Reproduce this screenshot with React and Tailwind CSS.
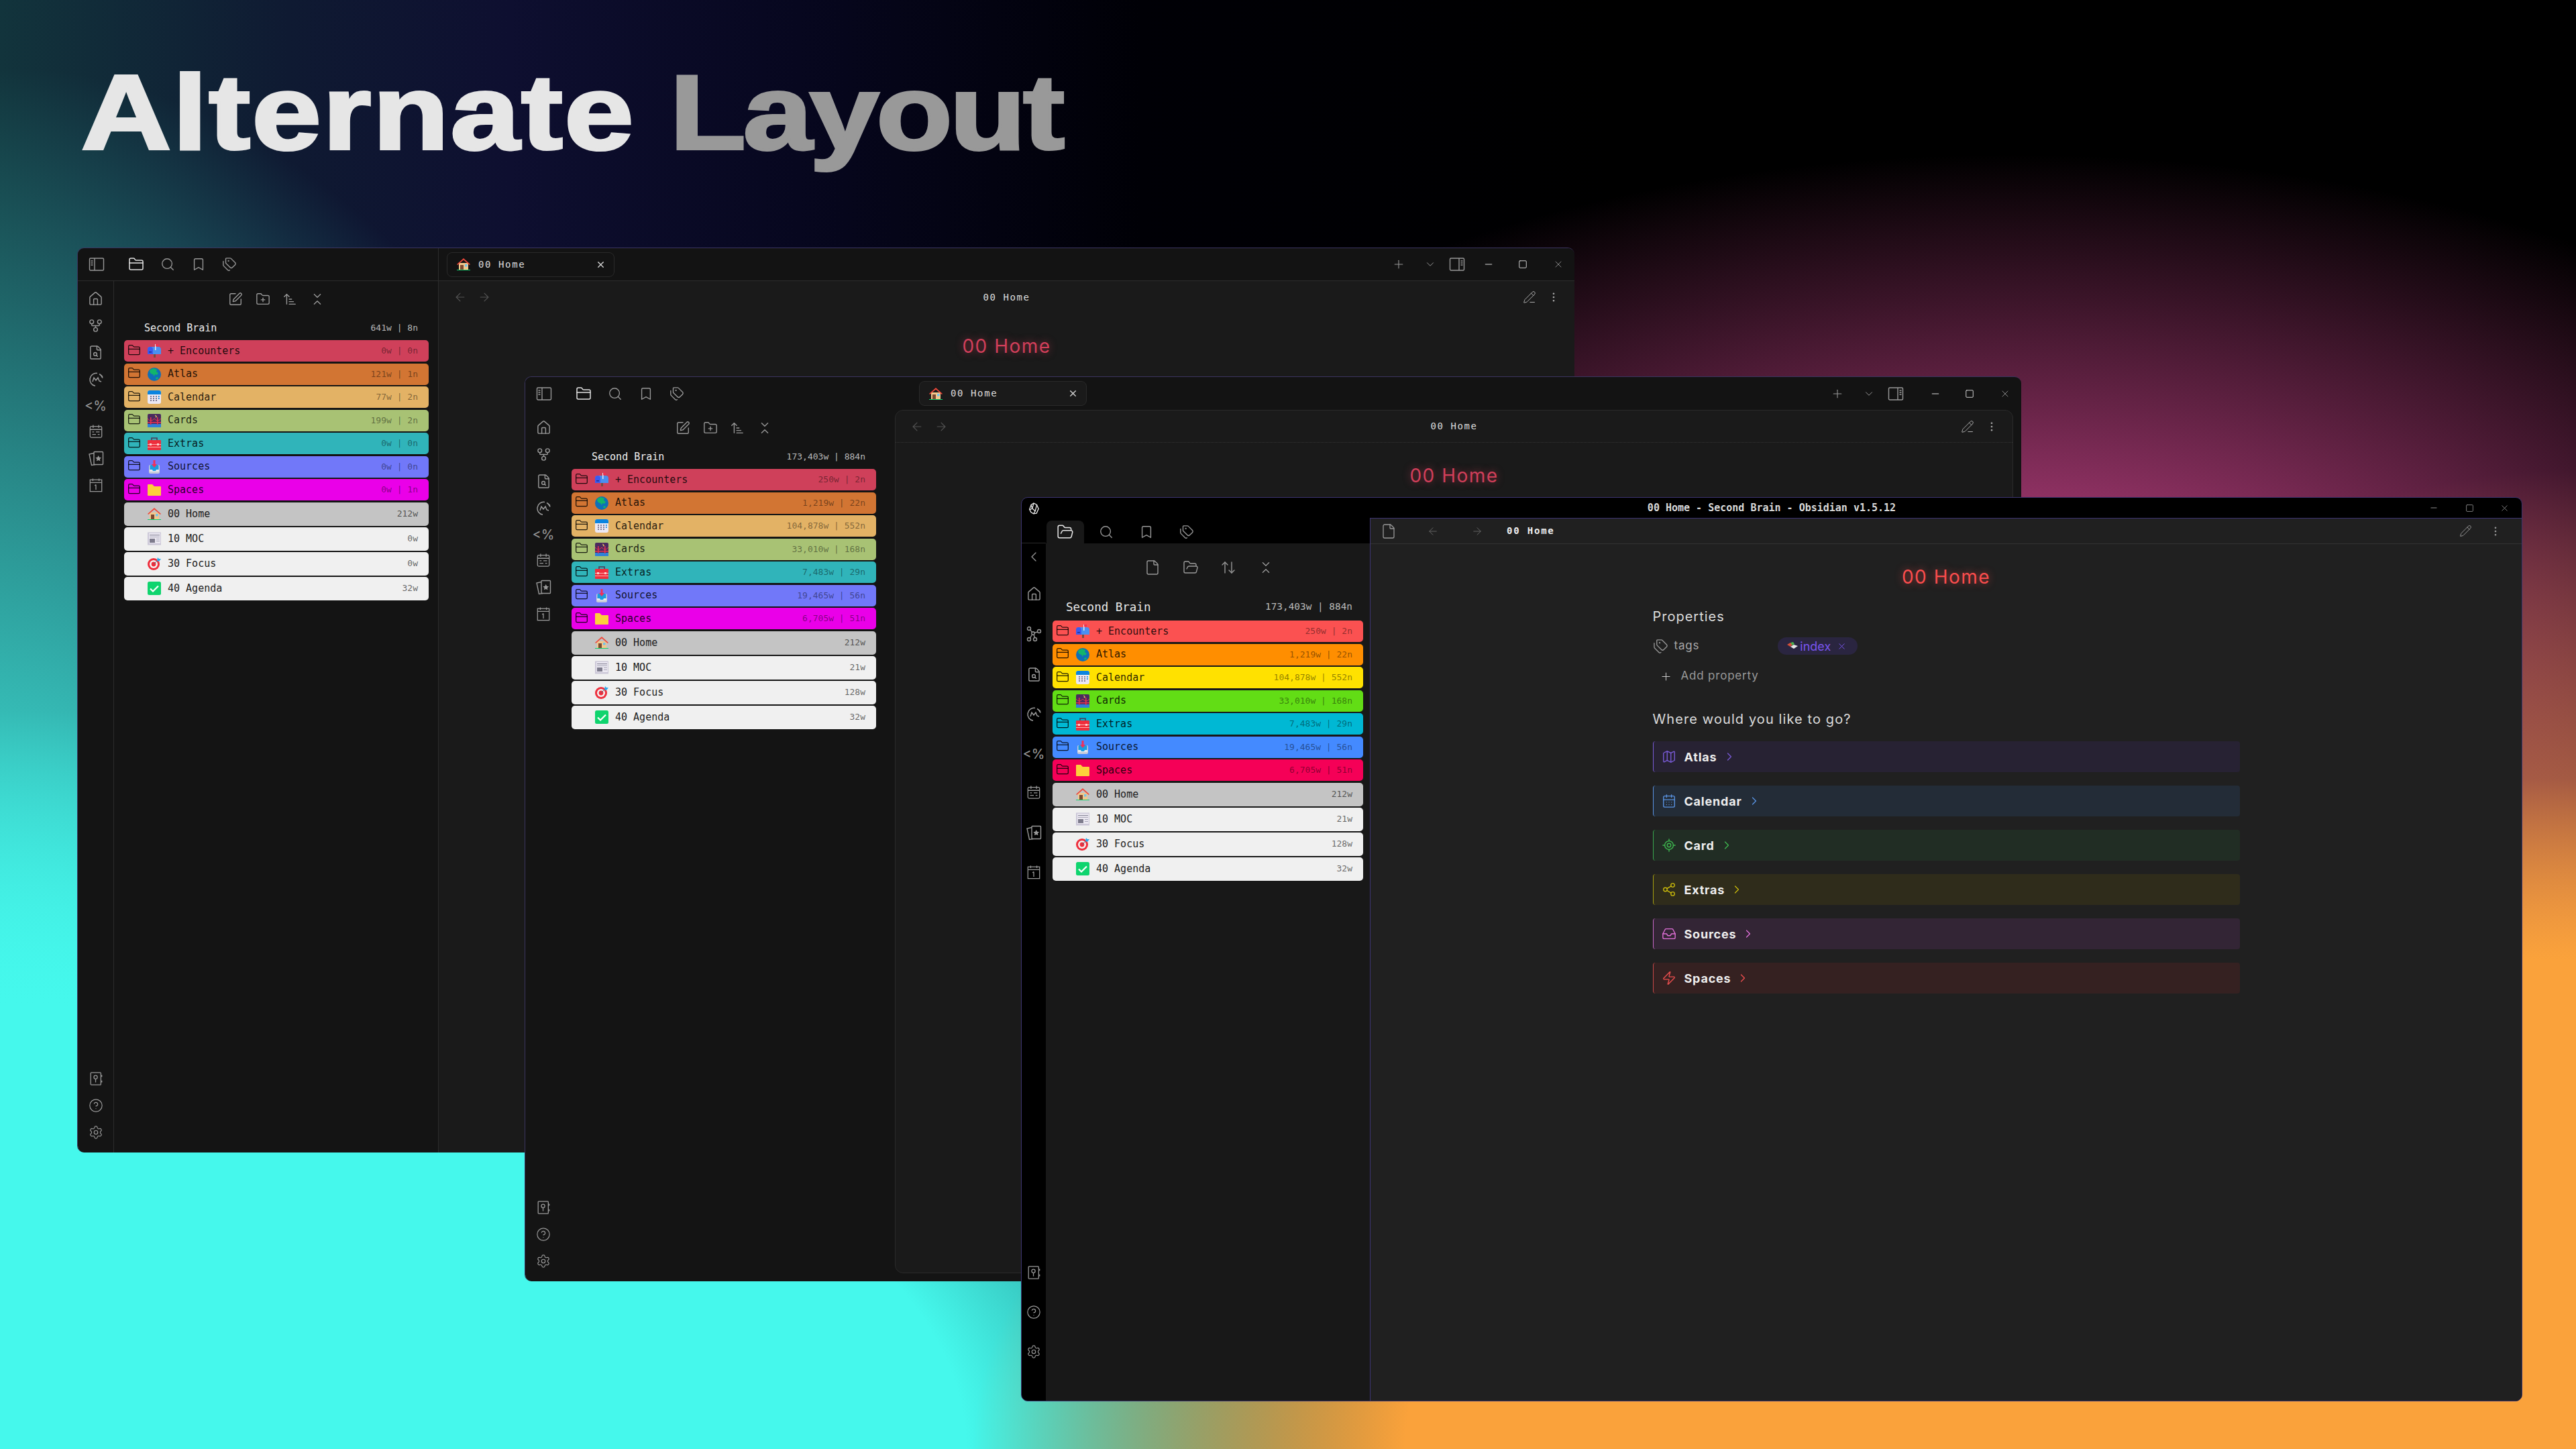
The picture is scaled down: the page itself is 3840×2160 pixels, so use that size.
import React from 'react';
import {
  FolderClosed, FolderOpen, Search, Bookmark, Tags, SquarePen, FolderPlus, ArrowUpNarrowWide, ChevronsDownUp,
  House, GitFork, FileSearch, CircleHelp, Settings, Plus, ChevronDown, Minus, Square, X, PencilLine,
  EllipsisVertical, ArrowLeft, ArrowRight, File, ArrowUpDown, ChevronLeft, Pencil, Map as MapIcon, CalendarDays,
  LocateFixed, Share2, Inbox, Zap, ChevronRight,
} from 'lucide-react';

const mono = "font-['DejaVu_Sans_Mono',monospace]";
const sans = "font-['Inter',sans-serif]";

// Emoji drawings, no colour emoji font on the box
const Mailbox = () => (
  <svg viewBox="0 0 20 20" className="w-5 h-5">
    <rect x="9" y="14" width="3" height="6" fill="#7a4a3a" />
    <path d="M0 8a4 4 0 0 1 4-4h12a4 4 0 0 1 4 4v7H0z" fill="#4a90f0" />
    <path d="M0 8a4 4 0 0 1 8 0v7H0z" fill="#3b5bf0" />
    <rect x="2" y="11" width="4" height="1.5" fill="#1f2f90" />
    <rect x="11" y="0" width="1.5" height="9" fill="#e8e8f0" />
    <rect x="12" y="0" width="4" height="3" fill="#f03050" />
  </svg>
);
const Globe = () => (
  <svg viewBox="0 0 20 20" className="w-5 h-5">
    <circle cx="10" cy="10" r="10" fill="#0f6fb8" />
    <path d="M4 3l5-2 5 2-1 3 3 2-2 3-3-1-1 3-2-3-3-1-2-3z" fill="#12b56a" />
    <path d="M12 15l3-1 1 2-3 2z" fill="#12b56a" />
  </svg>
);
const CalendarEmoji = () => (
  <svg viewBox="0 0 20 20" className="w-5 h-5">
    <rect width="20" height="20" rx="3" fill="#ece9f4" />
    <path d="M0 6V3a3 3 0 0 1 3-3h14a3 3 0 0 1 3 3v3z" fill="#0a84e0" />
    <g fill="#7d7a95">
      <rect x="4" y="8" width="2" height="2" /><rect x="8" y="8" width="2" height="2" /><rect x="12" y="8" width="2" height="2" /><rect x="16" y="8" width="1.6" height="2" fill="#0a84e0" />
      <rect x="4" y="11" width="2" height="2" /><rect x="8" y="11" width="2" height="2" /><rect x="12" y="11" width="2" height="2" /><rect x="16" y="11" width="1.6" height="2" fill="#0a84e0" />
      <rect x="4" y="14" width="2" height="2" /><rect x="8" y="14" width="2" height="2" /><rect x="12" y="14" width="2" height="2" />
    </g>
  </svg>
);
const Bridge = () => (
  <svg viewBox="0 0 20 20" className="w-5 h-5">
    <rect width="20" height="20" rx="2" fill="#4a2a5e" />
    <rect y="15" width="20" height="5" fill="#2f80d8" />
    <path d="M0 7q5 6 10 0 5 6 10 0" fill="none" stroke="#e83050" strokeWidth="1" />
    <rect x="4" y="5" width="1.5" height="11" fill="#e83050" />
    <rect x="14" y="5" width="1.5" height="11" fill="#e83050" />
    <rect y="12" width="20" height="1.5" fill="#e83050" />
    <path d="M11 2l2 1-1 2 2-1" fill="none" stroke="#f4d060" strokeWidth="1" />
  </svg>
);
const Toolbox = () => (
  <svg viewBox="0 0 20 20" className="w-5 h-5">
    <path d="M6 5V2h8v3" fill="none" stroke="#4a3a5a" strokeWidth="1.6" />
    <rect y="5" width="20" height="15" rx="1" fill="#ee2e3c" />
    <rect y="11" width="20" height="1" fill="#ffb0b0" />
    <rect y="15" width="20" height="1" fill="#ffb0b0" />
    <rect x="3" y="10" width="3" height="3" fill="#ffd0d0" />
    <rect x="14" y="10" width="3" height="3" fill="#ffd0d0" />
  </svg>
);
const InboxEmoji = () => (
  <svg viewBox="0 0 20 20" className="w-5 h-5">
    <rect x="2" y="7" width="16" height="13" rx="2" fill="#c8ccd8" />
    <rect x="3.5" y="7" width="13" height="10" rx="1.5" fill="#1a9ce0" />
    <path d="M3 14h4l1 2h4l1-2h4v3H3z" fill="#e8eaf0" />
    <path d="M8.5 0h3v6H14l-4 5-4-5h2.5z" fill="#f0305a" />
  </svg>
);
const FolderEmoji = () => (
  <svg viewBox="0 0 20 20" className="w-5 h-5">
    <path d="M0 3a1 1 0 0 1 1-1h6l3 3h9a1 1 0 0 1 1 1v12a1 1 0 0 1-1 1H1a1 1 0 0 1-1-1z" fill="#fdd03b" />
  </svg>
);
const HouseEmoji = () => (
  <svg viewBox="0 0 20 20" className="w-5 h-5">
    <rect x="3" y="8" width="14" height="10" fill="#f3c78c" />
    <path d="M10 1L0 10l1.2 1L10 3.4 18.8 11l1.2-1z" fill="#f0483a" />
    <rect x="5" y="11" width="5" height="7" fill="#7b4a30" />
    <rect x="12" y="10" width="3.5" height="3.5" fill="#6fc4ee" />
    <rect y="18" width="20" height="1" fill="#10d070" />
  </svg>
);
const Newspaper = () => (
  <svg viewBox="0 0 20 20" className="w-5 h-5">
    <rect width="21" height="19" y="0.5" x="-0.5" rx="1" fill="#ccc8d8" />
    <rect x="2" y="2" width="17" height="15" fill="#ece9f2" />
    <rect x="3" y="4" width="15" height="1.2" fill="#8c8a9c" />
    <rect x="3" y="7" width="15" height="1" fill="#a8a6b8" />
    <rect x="3" y="10" width="8" height="6" fill="#7d7b8c" />
    <rect x="13" y="10" width="5" height="1" fill="#a8a6b8" />
    <rect x="13" y="13" width="5" height="1" fill="#a8a6b8" />
  </svg>
);
const Target = () => (
  <svg viewBox="0 0 20 20" className="w-5 h-5">
    <circle cx="9" cy="11" r="9" fill="#ee2e3c" />
    <circle cx="9" cy="11" r="6" fill="#f4f4f4" />
    <circle cx="9" cy="11" r="3.4" fill="#ee2e3c" />
    <path d="M9 11l8-8" stroke="#5a6a80" strokeWidth="1" />
    <path d="M14 5l1-4 2 2 3 0-3 4-3-1z" fill="#2ea8e8" />
  </svg>
);
const CheckEmoji = () => (
  <svg viewBox="0 0 20 20" className="w-5 h-5">
    <rect width="20" height="20" rx="2.5" fill="#0fd46e" />
    <path d="M4 10.5l4 4 8-8" fill="none" stroke="#fff" strokeWidth="2.2" />
  </svg>
);

// Obsidian's custom ribbon glyphs
const SidebarToggle = ({ right }) => (
  <svg viewBox="0 0 24 24" width="24" height="24" fill="none" stroke="currentColor" strokeWidth="1.4">
    <rect x="1.5" y="3" width="21" height="18" rx="1.5" />
    <path d={right ? 'M15 3v18' : 'M9 3v18'} />
    <path d={right ? 'M17.5 7h3M17.5 10h3M17.5 13h3' : 'M3.5 7h3M3.5 10h3M3.5 13h3'} />
  </svg>
);
const MakeMd = () => (
  <svg viewBox="0 0 24 24" width="24" height="24" fill="none" stroke="currentColor" strokeWidth="1.5">
    <path d="M14 2.5a9.5 9.5 0 1 0-3 18.8M19 5l3 2.5" />
    <path d="M17 3.5a9.5 9.5 0 0 1 5 6" />
    <path d="M7 15l2-6 3 4 3-4 2 5 3 1" />
  </svg>
);
const CalendarList = () => (
  <svg viewBox="0 0 24 24" width="22" height="22" fill="none" stroke="currentColor" strokeWidth="1.4">
    <rect x="2.5" y="4" width="19" height="18" rx="2" />
    <path d="M2.5 9h19M7.5 1.5v5M16.5 1.5v5M6 13h3M12 13h6M6 17h6M15 17h3" />
  </svg>
);
const CardsIcon = () => (
  <svg viewBox="0 0 24 24" width="24" height="24" fill="none" stroke="currentColor" strokeWidth="1.4">
    <rect x="9" y="2.5" width="13.5" height="19" rx="1" />
    <path d="M9 4.5L2 6l3.5 16.5L11 21.5" />
    <path d="M15.7 8l1.4 2.8 3 .4-2.2 2.1.5 3-2.7-1.4-2.7 1.4.5-3-2.2-2.1 3-.4z" fill="currentColor" stroke="none" />
  </svg>
);
const CalendarOne = () => (
  <svg viewBox="0 0 24 24" width="22" height="22" fill="none" stroke="currentColor" strokeWidth="1.4">
    <rect x="2.5" y="3.5" width="19" height="19" />
    <path d="M2.5 8h19M7 1.5v4M17 1.5v4M12 11.5v8M10 13l2-1.5" />
  </svg>
);
const GraphIcon = () => (
  <svg viewBox="0 0 24 24" width="24" height="24" fill="none" stroke="currentColor" strokeWidth="1.4">
    <circle cx="5" cy="4" r="2.5" /><circle cx="20" cy="8" r="2.5" /><circle cx="5" cy="20" r="2.5" /><circle cx="14" cy="20" r="2.5" /><circle cx="11" cy="11" r="2.2" />
    <path d="M6.5 6l3 3M12.8 10.5l5-1.7M9.5 13l-3 5M12 13l1.5 4.5" />
  </svg>
);
const VaultIcon = () => (
  <svg viewBox="0 0 24 24" width="22" height="22" fill="none" stroke="currentColor" strokeWidth="1.4">
    <rect x="3.5" y="2" width="16.5" height="20" rx="1" />
    <circle cx="11.5" cy="9.5" r="2.8" />
    <path d="M11.5 12.3V18M21.5 6v3M21.5 15v3" />
  </svg>
);
const ObsidianLogo = () => (
  <svg viewBox="0 0 24 24" width="18" height="18" fill="none" stroke="#e8e8e8" strokeWidth="1.8">
    <path d="M12 1.5l6 3 3.5 8-4 9-6 1-5-3-3-6 3.5-9z" />
    <path d="M12 1.5L9 12l6 5M18 4.5L15 17l-3.5 5.5M6.5 4.5L9 12l-5 2.5" />
  </svg>
);
const TemplaterIcon = () => <span className={`${sans} text-[20px] leading-none`}>&lt;%</span>;
const Ico = ({ as: C, size = 22, stroke = 1.5 }) => <C size={size} strokeWidth={stroke} />;

const THEME_COLORS = ['bg-[#cf405a]', 'bg-[#d27533]', 'bg-[#e3b265]', 'bg-[#a8c274]', 'bg-[#30b4ba]', 'bg-[#7178f9]', 'bg-[#ea00e8]'];
const VIVID_COLORS = ['bg-[#fb5151]', 'bg-[#ff8e00]', 'bg-[#ffe100]', 'bg-[#62dd15]', 'bg-[#00b8d4]', 'bg-[#448aff]', 'bg-[#f50057]'];
const FOLDERS = [
  { label: '+ Encounters', icon: Mailbox },
  { label: 'Atlas', icon: Globe },
  { label: 'Calendar', icon: CalendarEmoji },
  { label: 'Cards', icon: Bridge },
  { label: 'Extras', icon: Toolbox },
  { label: 'Sources', icon: InboxEmoji },
  { label: 'Spaces', icon: FolderEmoji },
];
const FILES = [
  { label: '00 Home', icon: HouseEmoji, bg: 'bg-[#c4c4c4]' },
  { label: '10 MOC', icon: Newspaper, bg: 'bg-[#f0f0f0]' },
  { label: '30 Focus', icon: Target, bg: 'bg-[#f0f0f0]' },
  { label: '40 Agenda', icon: CheckEmoji, bg: 'bg-[#f0f0f0]' },
];
const SMALL_STATS = ['0w | 0n', '121w | 1n', '77w | 2n', '199w | 2n', '0w | 0n', '0w | 0n', '0w | 1n'];
const FULL_STATS = ['250w | 2n', '1,219w | 22n', '104,878w | 552n', '33,010w | 168n', '7,483w | 29n', '19,465w | 56n', '6,705w | 51n'];
const SMALL_FILES = ['212w', '0w', '0w', '32w'];
const FULL_FILES = ['212w', '21w', '128w', '32w'];

function TreeRows({ colors, stats, fileStats, statSize = 'text-[13px]' }) {
  return (
    <div className={`flex flex-col ${mono}`}>
      <div className="flex flex-col gap-[2.5px]">
        {FOLDERS.map((f, i) => {
          const Emoji = f.icon;
          return (
            <div key={f.label} className={`h-8 rounded-[5px] flex items-center pr-4 text-[15px] text-black/85 ${colors[i]}`}>
              <span className="w-[35px] pr-[5px] flex justify-center -mt-[3px]">
                <FolderClosed size={20} strokeWidth={1.5} />
              </span>
              <Emoji />
              <span className="ml-[10px]">{f.label}</span>
              <span className={`ml-auto text-black/45 ${statSize}`}>{stats[i]}</span>
            </div>
          );
        })}
      </div>
      <div className="flex flex-col gap-[2px] mt-[2.5px]">
        {FILES.map((f, i) => {
          const Emoji = f.icon;
          return (
            <div key={f.label} className={`h-[35px] rounded-[5px] flex items-center pl-[35px] pr-4 text-[15px] text-[#1c1c20] ${f.bg}`}>
              <Emoji />
              <span className="ml-[10px]">{f.label}</span>
              <span className={`ml-auto text-black/60 ${statSize}`}>{fileStats[i]}</span>
            </div>
          );
        })}
      </div>
    </div>
  );
}

// The themed window: first and second layer of the stack
function ThemedWindow({ className, sideW, strip, tabMl, tabClass, stats, fileStats, total, panelClass, controlGap, navBorder, ribbonLine }) {
  return (
    <div className={`absolute rounded-[10px] overflow-hidden flex flex-col border-t border-l border-[#3b3560] text-[#999] ${className}`}>
      <div className={`h-[49px] shrink-0 flex items-center bg-[#131313] ${strip}`}>
        <div className={`h-full flex items-center pl-4 ${sideW} ${ribbonLine ? 'border-r border-[#2c2c2c]' : ''}`}>
          <SidebarToggle />
          <span className="ml-[35px] text-[#e4e4e4]"><Ico as={FolderClosed} size={24} /></span>
          <span className="flex gap-[24px] ml-[24px]">
            <Ico as={Search} size={22} />
            <Ico as={Bookmark} size={22} />
            <Ico as={Tags} size={22} />
          </span>
        </div>
        <div className={`h-[37px] w-[250px] flex items-center pl-[14px] pr-[12px] rounded-[8px] border border-[#2a2a2a] text-[#ddd] ${tabMl} ${tabClass}`}>
          <HouseEmoji />
          <span className={`${mono} text-[14px] tracking-[1.6px] ml-[12px]`}>00 Home</span>
          <X size={15} className="ml-auto" />
        </div>
        <div className="ml-auto flex items-center pr-4">
          <Plus size={20} strokeWidth={1.3} />
          <ChevronDown size={18} strokeWidth={1.3} className="ml-[28px]" />
          <span className="ml-[19px]"><SidebarToggle right /></span>
          <Minus size={16} strokeWidth={2} className={controlGap} />
          <Square size={14} strokeWidth={1.6} className="ml-[36px] text-[#ddd]" />
          <X size={16} strokeWidth={1.3} className="ml-[38px]" />
        </div>
      </div>
      <div className="flex-1 flex min-h-0 bg-[#141414]">
        <div className={`flex shrink-0 ${sideW} ${ribbonLine ? 'border-r border-[#2c2c2c]' : ''}`}>
          <div className={`w-[54px] shrink-0 flex flex-col items-center pt-[15px] pb-[19px] ${ribbonLine ? 'border-r border-[#2c2c2c]' : ''}`}>
            <div className="flex flex-col items-center gap-[17px]">
              <Ico as={House} size={23} />
              <Ico as={GitFork} size={23} />
              <Ico as={FileSearch} size={23} />
              <MakeMd />
              <TemplaterIcon />
              <CalendarList />
              <CardsIcon />
              <CalendarOne />
            </div>
            <div className="mt-auto flex flex-col items-center gap-[18px]">
              <VaultIcon />
              <Ico as={CircleHelp} size={22} stroke={1.3} />
              <Ico as={Settings} size={22} stroke={1.3} />
            </div>
          </div>
          <div className="w-[454px] ml-[15px] shrink-0">
            <div className="h-[54px] flex items-center gap-[18.5px] pl-[155px]">
              <Ico as={SquarePen} size={22} />
              <Ico as={FolderPlus} size={22} />
              <Ico as={ArrowUpNarrowWide} size={22} />
              <Ico as={ChevronsDownUp} size={22} />
            </div>
            <div className={`${mono} h-[32px] mb-[2px] flex items-center justify-between pl-[30px] pr-4`}>
              <span className="text-[15px] text-[#eee]">Second Brain</span>
              <span className="text-[13px] text-[#b8b8b8]">{total}</span>
            </div>
            <TreeRows colors={THEME_COLORS} stats={stats} fileStats={fileStats} />
          </div>
        </div>
        <div className={`flex-1 bg-[#1a1a1a] ${panelClass}`}>
          <div className={`h-[48px] grid grid-cols-3 items-center px-[22px] ${navBorder}`}>
            <div className="flex gap-[16px] text-[#555]">
              <ArrowLeft size={20} strokeWidth={1.3} />
              <ArrowRight size={20} strokeWidth={1.3} />
            </div>
            <div className={`${mono} text-center text-[14px] tracking-[1.6px] text-[#ddd]`}>00 Home</div>
            <div className="flex justify-end items-center gap-[17px] text-[#aaa]">
              <PencilLine size={20} strokeWidth={1.2} />
              <EllipsisVertical size={18} strokeWidth={1.6} />
            </div>
          </div>
          <div className={`${sans} mt-[29px] text-center text-[28px] tracking-[1.5px] leading-[40px] text-[#d13f5a] [text-shadow:0_0_12px_rgba(209,63,90,0.6)]`}>00 Home</div>
        </div>
      </div>
    </div>
  );
}

const CALLOUTS = [
  { label: 'Atlas', icon: MapIcon, bg: 'bg-[#272233]', line: 'border-[#7a5bd8]', tint: 'text-[#7a5bd8]' },
  { label: 'Calendar', icon: CalendarDays, bg: 'bg-[#232c37]', line: 'border-[#5a94e4]', tint: 'text-[#5a94e4]' },
  { label: 'Card', icon: LocateFixed, bg: 'bg-[#212d24]', line: 'border-[#3aa84f]', tint: 'text-[#3fb950]' },
  { label: 'Extras', icon: Share2, bg: 'bg-[#2f2c1b]', line: 'border-[#a8a010]', tint: 'text-[#c9b90c]' },
  { label: 'Sources', icon: Inbox, bg: 'bg-[#332535]', line: 'border-[#c868c8]', tint: 'text-[#e070d8]' },
  { label: 'Spaces', icon: Zap, bg: 'bg-[#352121]', line: 'border-[#c84848]', tint: 'text-[#ef4f4f]' },
];

function FrontWindow() {
  return (
    <div className="absolute left-[1522px] top-[741px] w-[2238px] h-[1348px] rounded-[10px] overflow-hidden flex flex-col bg-black border border-[#3c3470] text-[#999]">
      <div className="h-[30px] shrink-0 relative flex items-center justify-end pr-[18px]">
        <span className="absolute left-[9px] top-[7px]"><ObsidianLogo /></span>
        <span className={`${mono} absolute inset-x-0 text-center text-[15px] font-bold text-[#d8d8d8]`}>00 Home - Second Brain - Obsidian v1.5.12</span>
        <Minus size={14} strokeWidth={1.6} />
        <Square size={13} strokeWidth={1.5} className="ml-[40px]" />
        <X size={15} strokeWidth={1.3} className="ml-[38px]" />
      </div>
      <div className="flex-1 flex min-h-0">
        <div className="w-[36px] shrink-0 flex flex-col items-center pb-[62px]">
          <div className="h-[38px] w-full border-b border-[#2a2a2a] shrink-0" />
          <div className="flex flex-col items-center gap-[36.5px] pt-[8px]">
            <span className="-mb-[5px]"><Ico as={ChevronLeft} size={24} stroke={1.3} /></span>
            <Ico as={House} size={23} />
            <GraphIcon />
            <Ico as={FileSearch} size={23} />
            <MakeMd />
            <TemplaterIcon />
            <CalendarList />
            <CardsIcon />
            <CalendarOne />
          </div>
          <div className="mt-auto flex flex-col items-center gap-[37px]">
            <VaultIcon />
            <Ico as={CircleHelp} size={22} stroke={1.3} />
            <Ico as={Settings} size={22} stroke={1.3} />
          </div>
        </div>
        <div className="w-[483px] shrink-0 flex flex-col">
          <div className="h-[38px] shrink-0 flex items-end pl-px">
            <div className="h-[34px] w-[56px] rounded-t-[8px] bg-[#181818] flex items-center justify-center text-[#e8e8e8]">
              <Ico as={FolderOpen} size={26} stroke={1.4} />
            </div>
            <div className="h-[34px] flex items-center gap-[38px] ml-[22px]">
              <Ico as={Search} size={22} />
              <Ico as={Bookmark} size={22} />
              <Ico as={Tags} size={22} />
            </div>
          </div>
          <div className="flex-1 bg-[#181818] pl-[10px] pr-[10px]">
            <div className="h-[72px] flex items-center pl-[137px] gap-[32.5px]">
              <Ico as={File} size={24} stroke={1.4} />
              <Ico as={FolderOpen} size={24} stroke={1.4} />
              <Ico as={ArrowUpDown} size={24} stroke={1.4} />
              <Ico as={ChevronsDownUp} size={22} />
            </div>
            <div className={`${mono} h-[43px] pt-[3px] flex items-center justify-between pl-5 pr-4`}>
              <span className="text-[17.5px] text-[#e8e8e8]">Second Brain</span>
              <span className="text-[14.4px] text-[#b8b8b8]">173,403w | 884n</span>
            </div>
            <TreeRows colors={VIVID_COLORS} stats={FULL_STATS} fileStats={FULL_FILES} />
          </div>
        </div>
        <div className="flex-1 flex flex-col bg-[#202020] border-l border-t border-[#3c3470]">
          <div className="h-[38px] shrink-0 flex items-center border-b border-[#333] pl-[15px] pr-[30px]">
            <Ico as={File} size={24} stroke={1.3} />
            <ArrowLeft size={18} strokeWidth={1.3} className="ml-[45px] text-[#666]" />
            <ArrowRight size={18} strokeWidth={1.3} className="ml-[48px] text-[#666]" />
            <span className={`${mono} ml-[35px] text-[14px] font-bold tracking-[1.8px] text-[#eee]`}>00 Home</span>
            <Pencil size={19} strokeWidth={1.2} className="ml-auto" />
            <EllipsisVertical size={18} strokeWidth={1.6} className="ml-[26px]" />
          </div>
          <div className={`${sans} w-[875px] mx-auto flex flex-col`}>
            <div className="mt-[29px] h-[40px] leading-[40px] text-center text-[28px] tracking-[1.5px] text-[#fb4d4d] [text-shadow:0_0_12px_rgba(251,77,77,0.6)]">00 Home</div>
            <div className="mt-[29px] h-[20px] leading-[20px] text-[20px] tracking-[1px] text-[#dcdcdc]">Properties</div>
            <div className="mt-[21px] h-[26px] flex items-center">
              <Ico as={Tags} size={23} stroke={1.4} />
              <span className="ml-[9px] text-[17px] tracking-[0.8px] text-[#a8a8a8]">tags</span>
              <span className="ml-[117px] h-[26px] w-[119px] rounded-full bg-[#2a2540] flex items-center pl-[14px] text-[#7a55f0] text-[18px]">
                <svg viewBox="0 0 16 12" className="w-4 h-3">
                  <path d="M0 4l5-3 3 3-3 3z" fill="#d8503a" /><path d="M5 7l5-3 6 2-6 4z" fill="#e8e8e8" /><path d="M5 1l4-1 2 3-3 2z" fill="#4ab04a" />
                </svg>
                <span className="ml-[3px]">index</span>
                <X size={15} strokeWidth={1.5} className="ml-[9px]" />
              </span>
            </div>
            <div className="mt-[19px] h-[26px] flex items-center pl-[10px] text-[#999] text-[17px] tracking-[0.8px]">
              <Plus size={19} strokeWidth={1.3} className="text-[#ccc]" />
              <span className="ml-[13px]">Add property</span>
            </div>
            <div className="mt-[36px] h-[30px] leading-[30px] text-[20px] tracking-[1.1px] text-[#dcdcdc]">Where would you like to go?</div>
            <div className="mt-[18px] flex flex-col gap-[20px]">
              {CALLOUTS.map((c) => {
                const Icon = c.icon;
                return (
                  <div key={c.label} className={`h-[46px] rounded-[4px] border-l flex items-center pl-[12px] ${c.bg} ${c.line}`}>
                    <span className={c.tint}><Icon size={22} strokeWidth={1.5} /></span>
                    <span className="ml-[12px] text-[18px] font-bold tracking-[0.8px] text-[#eee]">{c.label}</span>
                    <ChevronRight size={20} strokeWidth={1.5} className={`ml-[8px] ${c.tint}`} />
                  </div>
                );
              })}
            </div>
          </div>
        </div>
      </div>
    </div>
  );
}

export default function App() {
  return (
    <div className="relative w-[3840px] h-[2160px] overflow-hidden bg-black bg-[radial-gradient(ellipse_2390px_1000px_at_100%_100%,#faa23b_0%,#faa23b_73%,rgba(250,162,59,0)_100%),radial-gradient(ellipse_900px_800px_at_100%_1500px,#e88a50_0%,rgba(232,138,80,0)_100%),radial-gradient(ellipse_1450px_720px_at_3000px_950px,#c8458a_0%,rgba(200,69,138,0)_100%),radial-gradient(ellipse_2400px_1100px_at_0%_100%,#45f8ec_0%,#45f8ec_60%,rgba(69,248,236,0)_100%),radial-gradient(ellipse_1200px_2060px_at_0%_100%,#45f8ec_0%,#45f8ec_32%,rgba(69,248,236,0)_100%),linear-gradient(90deg,#12343c_0px,#0f1a32_430px,#0e0f30_760px,#07071f_1190px,#000006_1700px,#000000_2400px)]">
      <h1 className="absolute left-[121px] top-[69px] origin-left scale-x-[1.175] font-['Liberation_Sans',sans-serif] font-bold text-[158px] leading-[196px] text-[#e6e6e6] [-webkit-text-stroke:4px_currentColor] whitespace-nowrap">
        <span className="tracking-[2px]">Alternate</span> <span className="text-[#999] tracking-[-3.4px]">Layout</span>
      </h1>
      <ThemedWindow
        className="left-[115px] top-[369px] w-[2232px] h-[1349px]"
        sideW="w-[538px]"
        strip="border-b border-[#2c2c2c]"
        tabMl="ml-3"
        tabClass=""
        stats={SMALL_STATS}
        fileStats={SMALL_FILES}
        total="641w | 8n"
        panelClass=""
        controlGap="ml-[27px]"
        navBorder=""
        ribbonLine
      />
      <ThemedWindow
        className="left-[782px] top-[561px] w-[2231px] h-[1349px]"
        sideW="w-[551px]"
        strip=""
        tabMl="ml-9"
        tabClass="bg-[#1a1a1a]"
        stats={FULL_STATS}
        fileStats={FULL_FILES}
        total="173,403w | 884n"
        panelClass="mr-3 mb-3 rounded-[12px] border border-[#2a2a2a]"
        controlGap="ml-[39px]"
        navBorder="border-b border-dotted border-[#333]"
      />
      <FrontWindow />
    </div>
  );
}
